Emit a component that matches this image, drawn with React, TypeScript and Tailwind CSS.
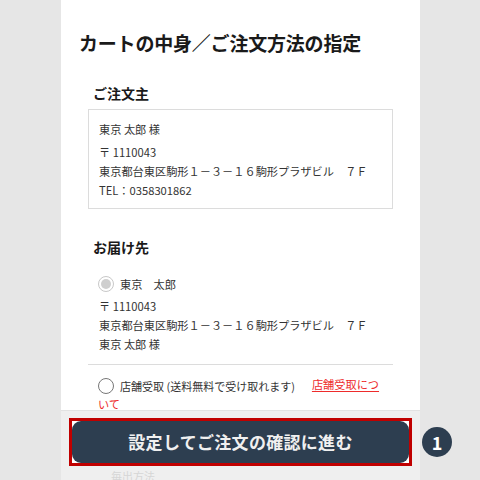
import React from 'react';

const jp = { fontFamily: '"Noto Sans CJK JP", "Noto Sans", sans-serif' };

const Radio = ({ checked, disabled }: { checked?: boolean; disabled?: boolean }) => (
  <span
    className={
      'inline-flex items-center justify-center w-[16px] h-[16px] rounded-full border-[1.5px] shrink-0 align-middle ' +
      (disabled ? 'border-[#c8c8c8]' : 'border-[#777]')
    }
  >
    {checked && <span className="w-[10px] h-[10px] rounded-full bg-[#cfcfcf]" />}
  </span>
);

export default function App() {
  return (
    <div className="w-[480px] h-[480px] bg-[#e6e6e6] overflow-hidden relative text-[#333]" style={jp}>
      <div className="ml-[61px] w-[359px] h-[480px] flex flex-col">
        {/* main card */}
        <div className="bg-white h-[411px] shrink-0 border-b border-[#e2e2e2] overflow-hidden">
          <h1 className="mt-[29px] pl-[18px] text-[19px] leading-[28px] font-bold text-[#1a1a1a] tracking-[-0.2px]">
            カートの中身／ご注文方法の指定
          </h1>

          <h2 className="mt-[26px] pl-[32px] text-[14px] leading-[20px] font-bold text-[#1a1a1a]">ご注文主</h2>
          <div className="mt-[6px] ml-[27px] w-[305px] h-[100px] border border-[#dcdcdc] pl-[10px] pt-[10px] text-[11.2px] leading-[19px]">
            <p className="mb-[4px]">東京 太郎 様</p>
            <p>〒 1110043</p>
            <p>東京都台東区駒形１－３－１６駒形プラザビル　７Ｆ</p>
            <p>TEL：0358301862</p>
          </div>

          <h2 className="mt-[28px] pl-[32px] text-[14px] leading-[20px] font-bold text-[#1a1a1a]">お届け先</h2>
          <div className="mt-[17px] ml-[37px] flex items-center gap-[6px] text-[11.2px] leading-[20px]">
            <Radio checked disabled />
            <span>東京　太郎</span>
          </div>
          <div className="mt-[3px] ml-[38px] text-[11.2px] leading-[19px]">
            <p>〒 1110043</p>
            <p>東京都台東区駒形１－３－１６駒形プラザビル　７Ｆ</p>
            <p>東京 太郎 様</p>
          </div>
          <div className="mt-[10px] ml-[27px] w-[305px] h-px bg-[#dcdcdc]" />

          <div className="mt-[10px] ml-[37px] w-[300px] text-[11px] leading-[18px]">
            <span className="inline-flex items-center gap-[6px] align-middle">
              <Radio />
              <span>店舗受取 (送料無料で受け取れます)</span>
            </span>
            <span className="ml-[17px] text-[11.2px] text-[#ee2b2b] underline underline-offset-2">
              店舗受取につ
              <br />
              いて
            </span>
          </div>
        </div>

        {/* footer */}
        <div className="bg-[#efefef] flex-1 pt-[7px] pl-[8px] relative overflow-hidden">
          <div className="w-[343px] h-[48px] border-[3px] border-[#c00000] bg-white">
            <button className="w-full h-full rounded-[9px] bg-[#2d3e50] text-[#f0f0f0] text-[17px] font-bold tracking-[0.3px]">
              設定してご注文の確認に進む
            </button>
          </div>
          <p className="mt-[3px] ml-[42px] text-[11px] leading-[14px] text-[#d6d6d6]">毎出方法</p>
        </div>
      </div>

      <div className="absolute left-[422px] top-[427px] w-[30px] h-[30px] rounded-full bg-[#2d3e50] text-white flex items-center justify-center text-[18px] font-bold">
        1
      </div>
    </div>
  );
}
